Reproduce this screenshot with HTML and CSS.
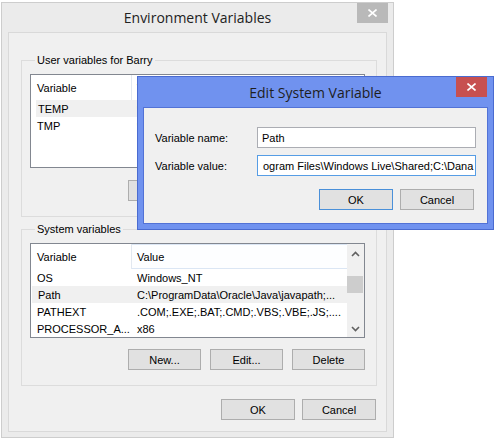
FILE: index.html
```html
<!DOCTYPE html>
<html lang="en">
<head>
<meta charset="utf-8">
<title>Environment Variables</title>
<link rel="stylesheet" href="styles.css">
</head>
<body>
<div class="desk">
  <div class="win">
    <div class="titlebar">
      <span>Environment Variables</span>
      <div class="close"><svg width="9" height="8" viewBox="0 0 9 8"><path d="M0.5 0.5 L8.5 7.5 M8.5 0.5 L0.5 7.5" stroke="#fff" stroke-width="1.6" fill="none"/></svg></div>
    </div>
    <div class="client">
      <fieldset class="group">
        <legend>User variables for Barry</legend>
        <div class="list list-user">
          <div class="list-body">
            <div class="hdr"><div class="c1">Variable</div><div class="c2">Value</div></div>
            <div class="row sel sel-user"><div class="c1">TEMP</div><div class="c2">%USERPROFILE%\AppData\Local\Temp</div></div>
            <div class="row"><div class="c1">TMP</div><div class="c2">%USERPROFILE%\AppData\Local\Temp</div></div>
          </div>
        </div>
        <div class="btns">
          <button class="btn">New...</button>
          <button class="btn">Edit...</button>
          <button class="btn">Delete</button>
        </div>
      </fieldset>
      <fieldset class="group group-sys">
        <legend>System variables</legend>
        <div class="list list-sys">
          <div class="list-body">
            <div class="hdr"><div class="c1">Variable</div><div class="c2 hover">Value</div></div>
            <div class="row"><div class="c1">OS</div><div class="c2">Windows_NT</div></div>
            <div class="row sel"><div class="c1">Path</div><div class="c2">C:\ProgramData\Oracle\Java\javapath;...</div></div>
            <div class="row"><div class="c1">PATHEXT</div><div class="c2">.COM;.EXE;.BAT;.CMD;.VBS;.VBE;.JS;....</div></div>
            <div class="row"><div class="c1">PROCESSOR_A...</div><div class="c2">x86</div></div>
          </div>
          <div class="sb">
            <div class="sb-arrow"><svg width="9" height="6" viewBox="0 0 9 6"><path d="M1 5 L4.5 1.5 L8 5" stroke="#606060" stroke-width="1.6" fill="none"/></svg></div>
            <div class="sb-track"><div class="sb-thumb"></div></div>
            <div class="sb-arrow sb-down"><svg width="9" height="6" viewBox="0 0 9 6"><path d="M1 1 L4.5 4.5 L8 1" stroke="#606060" stroke-width="1.6" fill="none"/></svg></div>
          </div>
        </div>
        <div class="btns btns-sys">
          <button class="btn">New...</button>
          <button class="btn">Edit...</button>
          <button class="btn">Delete</button>
        </div>
      </fieldset>
      <div class="mainbtns">
        <button class="btn btn-wide">OK</button>
        <button class="btn btn-wide">Cancel</button>
      </div>
    </div>
  </div>

  <div class="dlg">
    <div class="titlebar dlg-title">
      <span>Edit System Variable</span>
      <div class="close red"><svg width="9" height="8" viewBox="0 0 9 8"><path d="M0.5 0.5 L8.5 7.5 M8.5 0.5 L0.5 7.5" stroke="#fff" stroke-width="1.6" fill="none"/></svg></div>
    </div>
    <div class="client dlg-client">
      <div class="form">
        <div class="lbl">Variable name:</div>
        <div class="field">Path</div>
        <div class="lbl">Variable value:</div>
        <div class="field focus">ogram Files\Windows Live\Shared;C:\Dana</div>
      </div>
      <div class="dlgbtns">
        <button class="btn btn-wide default">OK</button>
        <button class="btn btn-wide">Cancel</button>
      </div>
    </div>
  </div>
</div>
</body>
</html>
```
FILE: styles.css
```css
* { box-sizing: border-box; }
html, body { margin: 0; padding: 0; }
body {
  background: #fff;
  font-family: "Liberation Sans", Arial, sans-serif;
  font-size: 11px;
  color: #000;
}
.desk {
  position: relative;
  width: 497px;
  height: 444px;
  overflow: hidden;
}

/* main window */
.win {
  position: absolute;
  left: 1px;
  top: 2px;
  width: 393px;
  height: 436px;
  border: 1px solid #cdcdcd;
  background: #ebebeb;
  display: flex;
  flex-direction: column;
}
.titlebar {
  position: relative;
  flex: none;
  height: 29px;
  display: flex;
  align-items: center;
  justify-content: center;
  font-family: "Open Sans", "Noto Sans", sans-serif;
  font-size: 14px;
  color: #222;
}
.close {
  position: absolute;
  top: 0;
  right: 5px;
  width: 31px;
  height: 20px;
  background: #b9b9b9;
  display: flex;
  align-items: center;
  justify-content: center;
}
.close svg { display: block; }
.close.red { background: #c75050; right: 6px; }

.client {
  flex: 1;
  margin: 0 6px 7px;
  border: 1px solid #d9d9d9;
  background: #f0f0f0;
  display: flex;
  flex-direction: column;
  padding: 0 9px 11px 12px;
}

/* group boxes */
.group {
  margin: 20px 0 0;
  padding: 0 11px 15px 8px;
  border: 1px solid #dcdcdc;
  min-width: 0;
}
.group-sys { margin-top: 5px; }
.group legend {
  padding: 0 2px;
  margin-left: 5px;
  line-height: 14px;
}

/* list views */
.list {
  margin-top: 7px;
  height: 94px;
  border: 1px solid #828790;
  background: #fff;
  display: flex;
  overflow: hidden;
}
.list-sys { height: 95px; }
.list-body {
  flex: 1;
  min-width: 0;
  overflow: hidden;
}
.hdr {
  display: flex;
  height: 25px;
}
.hdr .c1 {
  width: 101px;
  flex: none;
  border-right: 1px solid #e2e8f0;
  padding-left: 6px;
  display: flex;
  align-items: center;
}
.hdr .c2 {
  width: 216px;
  flex: none;
  padding-left: 5px;
  display: flex;
  align-items: center;
}
.hdr .c2.hover {
  border: 1px solid #dbe6f4;
  border-left: none;
  padding-left: 5px;
  background: #fdfeff;
}
.row {
  display: flex;
  height: 17px;
  align-items: center;
  white-space: nowrap;
}
.row .c1 {
  width: 101px;
  flex: none;
  padding-left: 6px;
  overflow: hidden;
}
.row .c2 {
  flex: 1;
  min-width: 0;
  padding-left: 5px;
  overflow: hidden;
}
.row.sel {
  background: #f0f0f0;
  margin-left: 1px;
}
.row.sel .c1 { width: 100px; }
.row.sel-user { margin-left: 5px; }
.row.sel-user .c1 { width: 96px; padding-left: 2px; }

/* scrollbar */
.sb {
  width: 17px;
  flex: none;
  background: #f0f0f0;
  display: flex;
  flex-direction: column;
}
.sb-arrow {
  height: 17px;
  flex: none;
  display: flex;
  align-items: center;
  justify-content: center;
  padding-top: 2px;
}
.sb-down { padding-top: 0; padding-bottom: 0; align-items: flex-end; padding-bottom: 5px; }
.sb-arrow svg { display: block; }
.sb-track { flex: 1; }
.sb-thumb {
  margin: 15px 1px 0 0;
  height: 17px;
  background: #cdcdcd;
}

/* buttons */
.btns {
  display: flex;
  justify-content: flex-end;
  gap: 9px;
  margin-top: 12px;
}
.btns-sys { margin-top: 11px; }
.btn {
  width: 73px;
  height: 21px;
  padding: 0;
  margin: 0;
  border: 1px solid #adadad;
  background: #e1e1e1;
  font-family: "Liberation Sans", Arial, sans-serif;
  font-size: 11px;
  color: #000;
}
.btn-wide { width: 74px; }
.btn.default { border-color: #4a90d9; }
.mainbtns {
  display: flex;
  justify-content: flex-end;
  gap: 7px;
  margin: 13px 1px 0 0;
}

/* edit dialog */
.dlg {
  position: absolute;
  left: 137px;
  top: 76px;
  width: 357px;
  height: 154px;
  border: 1px solid #4a6bd0;
  background: #7092ef;
  display: flex;
  flex-direction: column;
}
.dlg-title { height: 30px; color: #1e1e1e; }
.dlg-client {
  margin: 0 5px 5px;
  border: 1px solid #5272d6;
  padding: 19px 11px 0 11px;
}
.form {
  display: grid;
  grid-template-columns: 102px 219px;
  grid-auto-rows: 21px;
  row-gap: 7px;
}
.lbl {
  display: flex;
  align-items: center;
}
.field {
  border: 1px solid #abadb3;
  background: #fff;
  padding-left: 4px;
  display: flex;
  align-items: center;
  white-space: nowrap;
  overflow: hidden;
}
.field.focus { border-color: #569de5; padding-left: 5px; }
.dlgbtns {
  display: flex;
  justify-content: flex-end;
  gap: 7px;
  margin: 13px 2px 0 0;
}
```
